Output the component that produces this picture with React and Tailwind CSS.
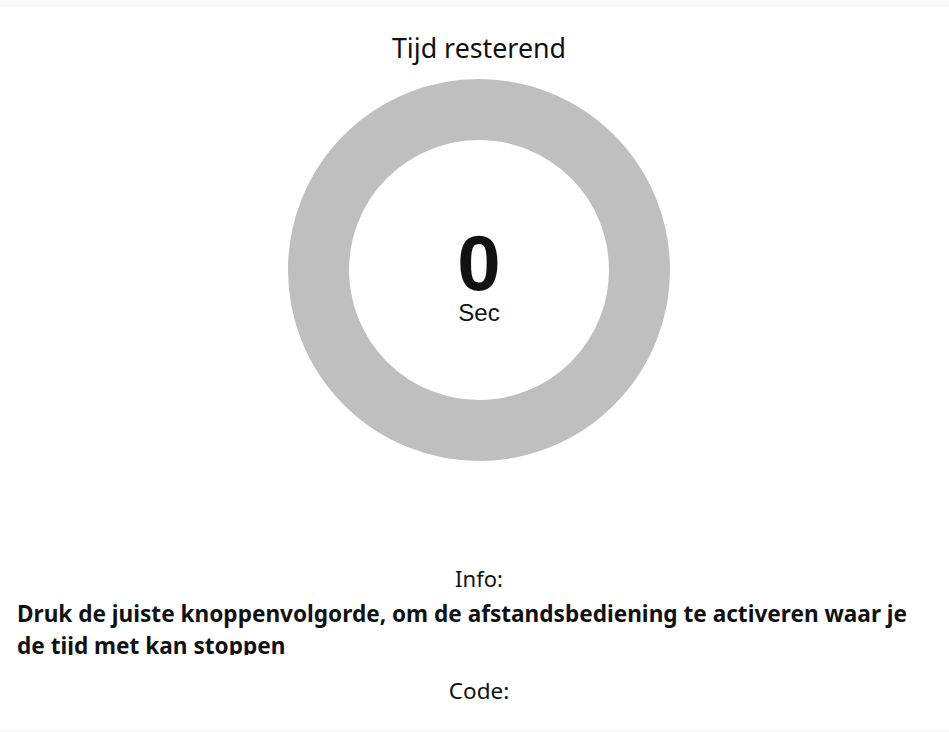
export default function App() {
  const seconds = 0;

  return (
    <div className="min-h-screen bg-[#fafafa] pt-[7px]">
      <div
        className="bg-white h-[722px] flex flex-col text-[#111]"
        style={{ fontFamily: '"Noto Sans", "Open Sans", sans-serif' }}
      >
        <div className="flex flex-col items-center pl-[9px]">
          <h2 className="mt-[26px] text-[26.8px] leading-[30px]">Tijd resterend</h2>

          {/* countdown ring */}
          <div className="mt-[16px] w-[382px] h-[382px] rounded-full border-[61px] border-[#bfbfbf] flex flex-col items-center justify-center">
            <div
              className="flex flex-col items-center mt-[12px]"
              style={{ fontFamily: '"Liberation Sans", Arial, sans-serif' }}
            >
              <span className="text-[78px] font-bold leading-[72px]">{seconds}</span>
              <span className="text-[24px] leading-[26px] mt-[1px]">Sec</span>
            </div>
          </div>

          <div className="mt-[102px] text-[22px] leading-[30px]">Info:</div>
        </div>

        <p className="pl-[17px] pr-[28px] mt-[5px] h-[57px] overflow-hidden text-[22.6px] font-bold leading-[32px]">
          Druk de juiste knoppenvolgorde, om de afstandsbediening te activeren waar je de tijd met kan stoppen
        </p>

        <div className="flex justify-center pl-[9px] mt-[21px]">
          <div className="text-[22.5px] leading-[30px]">Code:</div>
        </div>
      </div>
    </div>
  );
}
